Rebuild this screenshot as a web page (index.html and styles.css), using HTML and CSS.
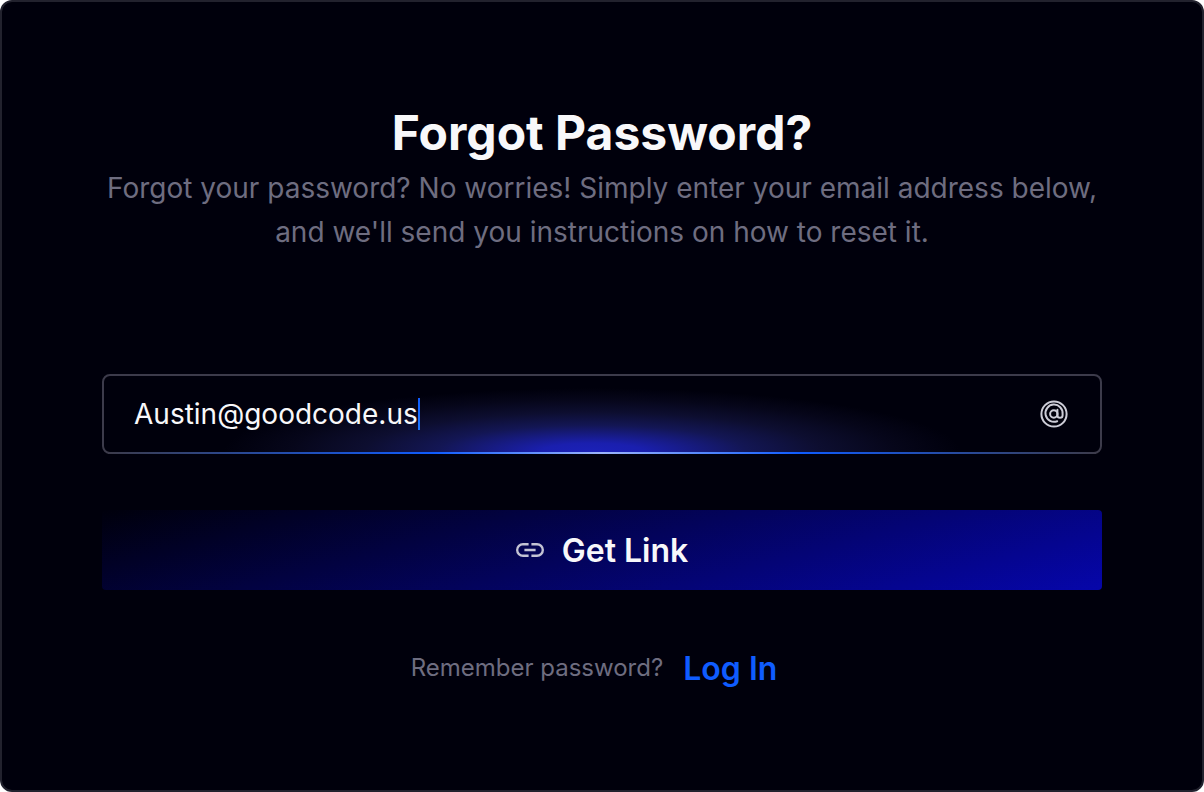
FILE: index.html
```html
<!DOCTYPE html>
<html lang="en">
<head>
<meta charset="utf-8">
<meta name="viewport" content="width=device-width, initial-scale=1">
<title>Forgot Password</title>
<link rel="stylesheet" href="styles.css">
</head>
<body>
<main class="card">
  <header class="intro">
    <h1 class="title">Forgot Password?</h1>
    <p class="description">Forgot your password? No worries! Simply enter your email address below, and we'll send you instructions on how to reset it.</p>
  </header>
  <form class="form">
    <div class="field">
      <input class="field-input" type="text" inputmode="email" aria-label="Email address" value="Austin@goodcode.us" size="14" spellcheck="false">
      <span class="caret"></span>
      <svg class="at-icon" viewBox="0 0 28 28" fill="none" stroke="currentColor" stroke-width="2" stroke-linecap="round" aria-hidden="true">
        <circle cx="14" cy="14" r="12.6"/>
        <path d="M17.2 21.2A8.6 8.6 0 1 1 22.6 14v1.2a2.6 2.6 0 0 1-5.2 0v-5.4"/>
        <circle cx="13.8" cy="14" r="3.7"/>
      </svg>
    </div>
    <button class="submit" type="button">
      <svg class="link-icon" viewBox="2 7 20 10" fill="currentColor" aria-hidden="true">
        <path d="M3.7 12c0-1.8 1.5-3.3 3.3-3.3h4V7H7a5 5 0 0 0 0 10h4v-1.7H7c-1.8 0-3.3-1.5-3.3-3.3zM8 12.9h8v-1.8H8v1.8zM17 7h-4v1.7h4a3.3 3.3 0 0 1 0 6.6h-4V17h4a5 5 0 0 0 0-10z"/>
      </svg>
      <span class="submit-label">Get Link</span>
    </button>
  </form>
  <p class="footer"><span>Remember password?</span><a class="login" href="#">Log In</a></p>
</main>
</body>
</html>
```
FILE: styles.css
```css
* {
  box-sizing: border-box;
}

body {
  margin: 0;
  background: #fff;
  color: #f8f8fa;
  font-family: Inter, "Liberation Sans", sans-serif;
}

.card {
  min-height: 100vh;
  padding: 100px;
  border: 2px solid #22222e;
  border-radius: 12px;
  background: #00000c;
}

.intro {
  text-align: center;
}

.title {
  margin: 0 0 2px;
  font-size: 48px;
  font-weight: 700;
  line-height: 62px;
}

.description {
  margin: 0;
  color: #6e6d80;
  font-size: 28px;
  line-height: 44px;
}

.form {
  display: flex;
  flex-direction: column;
  gap: 56px;
  margin-top: 120px;
}

.field {
  position: relative;
  display: flex;
  align-items: center;
  height: 80px;
  padding: 0 32px 0 30px;
  border: 2px solid #3c3b4b;
  border-radius: 8px;
  background: radial-gradient(ellipse 37% 84% at 49% 100%, #1b21b8 0%, #1a1fae 14%, #171b84 27%, #131654 42%, #0d0e30 62%, #06061a 82%, #00000c 100%);
}

.field::after {
  content: "";
  position: absolute;
  right: 4px;
  bottom: -2px;
  left: 4px;
  height: 2px;
  background: linear-gradient(90deg, #3c3b4b, #0f5cff 33%, #9db5fa 50%, #0f5cff 70%, #3c3b4b);
}

.field-input {
  field-sizing: content;
  padding: 0;
  border: 0;
  outline: 0;
  background: transparent;
  color: #f8f8fa;
  font: 400 28px/40px Inter, "Liberation Sans", sans-serif;
}

.caret {
  width: 2px;
  height: 32px;
  background: linear-gradient(#0f5cff, #1c78ff);
}

.at-icon {
  width: 28px;
  height: 28px;
  margin-left: auto;
  color: #cdcdd8;
}

.submit {
  display: flex;
  align-items: center;
  justify-content: center;
  gap: 18px;
  height: 80px;
  padding: 0;
  border: 0;
  border-radius: 4px;
  background: linear-gradient(165deg, #00000c, #0606aa);
  color: #f8f8fa;
  font: 600 32px/40px Inter, "Liberation Sans", sans-serif;
  cursor: pointer;
}

.submit-label {
  padding-top: 2px;
}

.link-icon {
  width: 28px;
  height: 14px;
  color: #c3c3d4;
}

.footer {
  display: flex;
  align-items: center;
  justify-content: center;
  gap: 20px;
  margin: 57px 0 0;
  padding-right: 16px;
  color: #6e6d80;
  font-size: 24px;
  line-height: 40px;
}

.login {
  padding-top: 2px;
  color: #0f5cff;
  font-size: 32px;
  font-weight: 600;
  text-decoration: none;
}
```
